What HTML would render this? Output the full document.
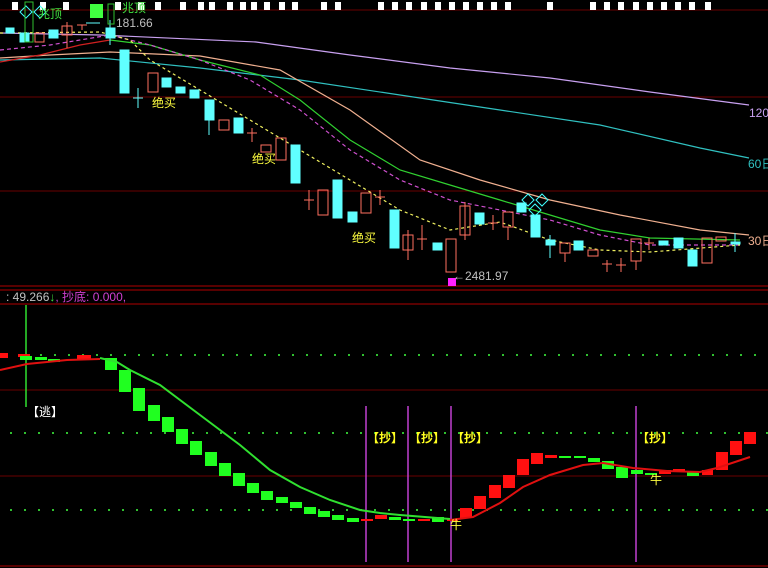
<!DOCTYPE html>
<html><head><meta charset="utf-8"><style>
html,body{margin:0;padding:0;background:#000;width:768px;height:568px;overflow:hidden}
svg{display:block}
text{font-family:"Liberation Sans","Noto Sans CJK SC",sans-serif;font-size:12px}
</style></head><body>
<svg width="768" height="568" viewBox="0 0 768 568">
<!-- panel lines -->
<g stroke="#6a0000" stroke-width="1">
<line x1="0" y1="10" x2="768" y2="10"/>
<line x1="0" y1="97" x2="768" y2="97"/>
<line x1="0" y1="191" x2="768" y2="191"/>
<line x1="0" y1="390" x2="768" y2="390"/>
<line x1="0" y1="476" x2="768" y2="476"/>
</g>
<g stroke="#b00000" stroke-width="1">
<line x1="0" y1="286" x2="768" y2="286"/>
<line x1="0" y1="290" x2="768" y2="290"/>
<line x1="0" y1="304" x2="768" y2="304"/>
<line x1="0" y1="566" x2="768" y2="566"/>
</g>
<!-- top markers -->
<g fill="#fff">
<rect x="12" y="2" width="6" height="8"/><rect x="40" y="2" width="6" height="8"/><rect x="63" y="2" width="6" height="8"/><rect x="115" y="2" width="6" height="8"/><rect x="138" y="2" width="6" height="8"/><rect x="155" y="2" width="6" height="8"/><rect x="180" y="2" width="6" height="8"/><rect x="198" y="2" width="6" height="8"/><rect x="209" y="2" width="6" height="8"/><rect x="227" y="2" width="6" height="8"/><rect x="240" y="2" width="6" height="8"/><rect x="251" y="2" width="6" height="8"/>
<rect x="264" y="2" width="6" height="8"/><rect x="279" y="2" width="6" height="8"/><rect x="292" y="2" width="6" height="8"/><rect x="321" y="2" width="6" height="8"/><rect x="335" y="2" width="6" height="8"/><rect x="378" y="2" width="6" height="8"/><rect x="392" y="2" width="6" height="8"/><rect x="406" y="2" width="6" height="8"/><rect x="421" y="2" width="6" height="8"/><rect x="435" y="2" width="6" height="8"/><rect x="449" y="2" width="6" height="8"/><rect x="463" y="2" width="6" height="8"/><rect x="477" y="2" width="6" height="8"/><rect x="491" y="2" width="6" height="8"/><rect x="505" y="2" width="6" height="8"/><rect x="547" y="2" width="6" height="8"/><rect x="590" y="2" width="6" height="8"/><rect x="604" y="2" width="6" height="8"/><rect x="618" y="2" width="6" height="8"/><rect x="633" y="2" width="6" height="8"/><rect x="647" y="2" width="6" height="8"/><rect x="661" y="2" width="6" height="8"/><rect x="675" y="2" width="6" height="8"/><rect x="689" y="2" width="6" height="8"/><rect x="705" y="2" width="6" height="8"/>
</g>
<!-- MAs -->
<g fill="none" stroke-width="1.2">
<polyline stroke="#c8a0f0" points="0,33 100,35 256,42 350,55 450,68 550,78 650,92 749,105"/>
<polyline stroke="#30c0c0" points="0,60 100,58 200,68 300,80 400,95 500,110 600,125 700,148 749,158"/>
<polyline stroke="#f0b090" points="0,58 50,55 110,52 200,56 280,70 350,110 420,160 480,180 550,200 620,215 700,230 749,235"/>
<polyline stroke="#30d030" points="110,40 150,45 200,60 260,75 300,100 350,140 400,170 450,185 500,200 550,215 600,230 650,238 740,240"/>
<polyline stroke="#d02020" points="0,62 40,55 80,45 110,40"/>
<polyline stroke="#d050d0" stroke-dasharray="4,3" points="0,50 50,45 110,35 150,45 200,60 250,80 300,110 350,150 400,180 450,200 500,210 550,220 600,235 650,245 740,245"/>
<polyline stroke="#f0f060" stroke-dasharray="3,3" points="0,33 100,32 130,40 150,60 200,90 250,120 300,150 350,180 400,210 450,230 500,222 550,240 600,250 650,252 740,245"/>
</g>
<!-- candles -->
<g stroke="#ff7060" fill="none">
<rect x="35" y="33" width="9" height="9"/><line x1="67" y1="22" x2="67" y2="48"/><rect x="62" y="26" width="10" height="9"/>
<line x1="77" y1="25" x2="87" y2="25"/><line x1="82" y1="25" x2="82" y2="30"/>
<rect x="148" y="73" width="10" height="19"/><rect x="219" y="120" width="10" height="10"/>
<line x1="247" y1="133" x2="257" y2="133"/><line x1="252" y1="128" x2="252" y2="142"/>
<rect x="261" y="145" width="10" height="7"/><rect x="276" y="138" width="10" height="22"/>
<line x1="304" y1="200" x2="314" y2="200"/><line x1="309" y1="190" x2="309" y2="210"/>
<rect x="318" y="190" width="10" height="25"/><rect x="361" y="193" width="10" height="20"/>
<line x1="375" y1="197" x2="385" y2="197"/><line x1="380" y1="190" x2="380" y2="205"/>
<rect x="403" y="235" width="10" height="15"/><line x1="408" y1="230" x2="408" y2="260"/>
<line x1="417" y1="239" x2="427" y2="239"/><line x1="422" y1="225" x2="422" y2="250"/>
<rect x="446" y="239" width="10" height="33"/>
<rect x="460" y="206" width="10" height="29"/><line x1="465" y1="202" x2="465" y2="240"/>
<line x1="488" y1="223" x2="498" y2="223"/><line x1="493" y1="215" x2="493" y2="230"/>
<rect x="503" y="212" width="10" height="15"/><line x1="508" y1="227" x2="508" y2="240"/>
<rect x="560" y="243" width="10" height="10"/><line x1="565" y1="253" x2="565" y2="262"/>
<rect x="588" y="250" width="10" height="6"/>
<line x1="602" y1="264" x2="612" y2="264"/><line x1="607" y1="260" x2="607" y2="272"/>
<line x1="616" y1="265" x2="626" y2="265"/><line x1="621" y1="258" x2="621" y2="272"/>
<rect x="631" y="239" width="10" height="22"/><line x1="636" y1="261" x2="636" y2="270"/>
<line x1="644" y1="243" x2="654" y2="243"/><line x1="649" y1="238" x2="649" y2="250"/>
<rect x="702" y="238" width="10" height="25"/>
<rect x="716" y="237" width="10" height="4"/>
</g>
<g fill="#60ffff" stroke="#60ffff">
<rect x="6" y="28" width="8" height="5"/><rect x="20" y="33" width="9" height="9"/><rect x="49" y="30" width="9" height="8"/>
<rect x="106" y="28" width="9" height="10"/><line x1="110" y1="20" x2="110" y2="45"/>
<rect x="120" y="50" width="9" height="43"/>
<line x1="133" y1="98" x2="143" y2="98"/><line x1="138" y1="88" x2="138" y2="108"/>
<rect x="162" y="78" width="9" height="9"/><rect x="176" y="87" width="9" height="6"/><rect x="190" y="90" width="9" height="8"/>
<rect x="205" y="100" width="9" height="20"/><line x1="209" y1="120" x2="209" y2="135"/>
<rect x="234" y="118" width="9" height="15"/>
<rect x="291" y="145" width="9" height="38"/>
<rect x="333" y="180" width="9" height="38"/><rect x="348" y="212" width="9" height="10"/>
<rect x="390" y="210" width="9" height="38"/><rect x="433" y="243" width="9" height="7"/>
<rect x="475" y="213" width="9" height="11"/>
<rect x="517" y="203" width="9" height="9"/><rect x="531" y="215" width="9" height="22"/>
<rect x="546" y="240" width="9" height="5"/><line x1="550" y1="235" x2="550" y2="258"/>
<rect x="574" y="241" width="9" height="9"/>
<rect x="659" y="241" width="9" height="4"/><rect x="674" y="238" width="9" height="10"/>
<rect x="688" y="250" width="9" height="16"/><rect x="731" y="242" width="9" height="2"/><line x1="735" y1="233" x2="735" y2="252"/>
</g>
<rect x="90" y="4" width="13" height="14" fill="#40ff40"/>
<line x1="86" y1="23" x2="100" y2="23" stroke="#60ffff"/>
<!-- diamonds -->
<g fill="none" stroke="#40ffff">
<path d="M20 12 l6 -6 6 6 -6 6z M34 12 l6 -6 6 6 -6 6z"/>
<path d="M522 200 l6 -6 6 6 -6 6z M536 200 l6 -6 6 6 -6 6z M529 210 l6 -6 6 6 -6 6z"/>
</g>
<rect x="25" y="2" width="8" height="40" fill="none" stroke="#30c030"/>
<rect x="108" y="4" width="6" height="20" fill="none" stroke="#30c030"/>
<rect x="448" y="278" width="8" height="8" fill="#ff20ff"/>
<!-- labels -->
<g fill="#40e040"><text x="38" y="18">兆顶</text><text x="122" y="12">兆顶</text></g>
<g fill="#c0c0c0"><text x="116" y="27">181.66</text><text x="453" y="280">←2481.97</text></g>
<g fill="#ffff40"><text x="152" y="107">绝买</text><text x="252" y="163">绝买</text><text x="352" y="242">绝买</text></g>
<text x="749" y="117" fill="#c8a0f0">120</text>
<text x="748" y="168" fill="#30c0c0">60日</text>
<text x="748" y="245" fill="#f0b090">30日</text>
<!-- lower header -->
<text x="6" y="301" fill="#c0c0c0">: 49.266<tspan fill="#40e040">↓</tspan><tspan fill="#d040d0">, 抄底: 0.000,</tspan></text>
<!-- dotted grid -->
<g stroke="#30c030" stroke-width="2" stroke-dasharray="2,12">
<line x1="40" y1="355" x2="768" y2="355"/><line x1="10" y1="433" x2="768" y2="433"/><line x1="10" y1="510" x2="768" y2="510"/>
</g>
<!-- verticals -->
<line x1="26" y1="305" x2="26" y2="407" stroke="#30e030" stroke-width="1.5"/>
<g stroke="#c040d0" stroke-width="1.5"><line x1="366" y1="406" x2="366" y2="562"/><line x1="408" y1="406" x2="408" y2="562"/><line x1="451" y1="406" x2="451" y2="562"/><line x1="636" y1="406" x2="636" y2="562"/></g>
<!-- blocks -->
<g fill="#ff1010">
<rect x="0" y="353" width="8" height="5"/><rect x="18" y="354" width="12" height="3"/><rect x="77" y="355" width="14" height="5"/>
<rect x="361" y="519" width="12" height="2"/><rect x="375" y="515" width="12" height="4"/><rect x="418" y="519" width="12" height="2"/><rect x="447" y="519" width="11" height="2"/>
<rect x="460" y="508" width="12" height="10"/><rect x="474" y="496" width="12" height="13"/><rect x="489" y="485" width="12" height="13"/><rect x="503" y="475" width="12" height="13"/><rect x="517" y="459" width="12" height="16"/><rect x="531" y="453" width="12" height="11"/><rect x="545" y="455" width="12" height="3"/>
<rect x="659" y="470" width="12" height="4"/><rect x="673" y="469" width="12" height="3"/><rect x="702" y="470" width="11" height="5"/><rect x="716" y="452" width="12" height="18"/><rect x="730" y="441" width="12" height="14"/><rect x="744" y="432" width="12" height="12"/>
</g>
<g fill="#20ff20">
<rect x="20" y="356" width="12" height="4"/><rect x="35" y="357" width="12" height="3"/><rect x="48" y="359" width="12" height="3"/>
<rect x="105" y="358" width="12" height="12"/><rect x="119" y="370" width="12" height="22"/><rect x="133" y="388" width="12" height="23"/><rect x="148" y="405" width="12" height="16"/><rect x="162" y="417" width="12" height="15"/><rect x="176" y="429" width="12" height="15"/><rect x="190" y="441" width="12" height="14"/><rect x="205" y="452" width="12" height="14"/><rect x="219" y="463" width="12" height="13"/><rect x="233" y="473" width="12" height="13"/><rect x="247" y="483" width="12" height="10"/><rect x="261" y="491" width="12" height="9"/><rect x="276" y="497" width="12" height="6"/><rect x="290" y="502" width="12" height="6"/><rect x="304" y="507" width="12" height="7"/><rect x="318" y="511" width="12" height="6"/><rect x="332" y="515" width="12" height="5"/><rect x="347" y="518" width="12" height="4"/><rect x="389" y="517" width="12" height="3"/><rect x="403" y="519" width="12" height="2"/><rect x="432" y="517" width="12" height="5"/>
<rect x="559" y="456" width="12" height="2"/><rect x="574" y="456" width="12" height="2"/><rect x="588" y="458" width="12" height="4"/><rect x="602" y="461" width="12" height="8"/><rect x="616" y="467" width="12" height="11"/><rect x="631" y="470" width="12" height="4"/><rect x="645" y="473" width="12" height="2"/><rect x="687" y="471" width="12" height="5"/>
</g>
<!-- curves -->
<polyline fill="none" stroke="#e01010" stroke-width="2" points="0,370 27,364 67,360 100,359"/>
<polyline fill="none" stroke="#30e030" stroke-width="2" points="100,358 117,362 130,370 160,385 200,415 240,445 270,470 300,487 330,500 360,510 380,513 400,515 450,519"/>
<polyline fill="none" stroke="#e01010" stroke-width="2" points="450,520 473,517 500,503 523,487 550,475 583,465 603,463 633,468 667,471 700,472 717,468 750,457"/>
<!-- lower labels -->
<text x="27" y="416" fill="#fff">【逃】</text>
<g fill="#ffff20" font-weight="bold"><text x="367" y="442">【抄】</text><text x="409" y="442">【抄】</text><text x="452" y="442">【抄】</text><text x="637" y="442">【抄】</text></g>
<g fill="#ffff40"><text x="450" y="529">牛</text><text x="650" y="484">牛</text></g>
</svg>
</body></html>
